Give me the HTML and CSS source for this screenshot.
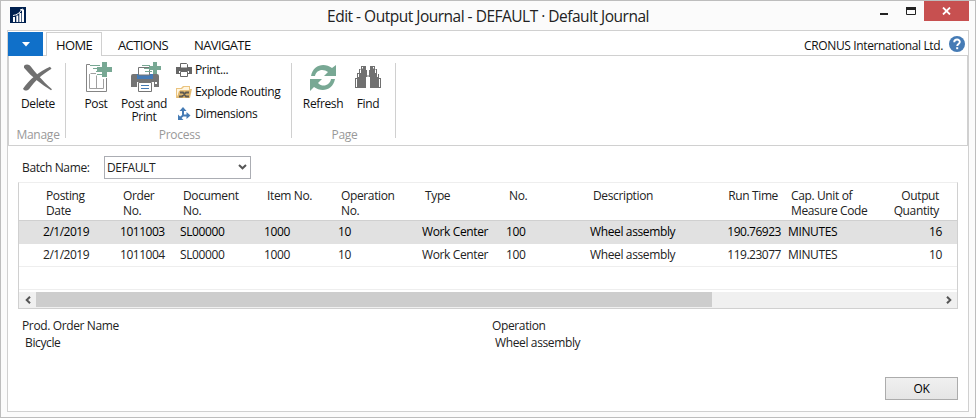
FILE: index.html
```html
<!DOCTYPE html>
<html lang="en">
<head>
<meta charset="utf-8">
<title>Edit - Output Journal</title>
<link rel="stylesheet" href="styles.css">
</head>
<body>
<div class="window">
  <header class="titlebar">
    <svg class="app-icon" width="16" height="16" viewBox="0 0 16 16"><rect width="16" height="16" fill="#00204f"/><path d="M3 10h2v5H3zM6.300 8.500h2V15h-2zM9.300 6h2v9h-2zM12 3h2v12h-2z" fill="#fff"/><path d="M3 8.500C7 8 9.500 6 12 2.500M10 3l3-1v2.500" fill="none" stroke="#fff"/></svg>
    <h1 class="title">Edit - Output Journal - DEFAULT · Default Journal</h1>
    <div class="controls">
      <svg width="75" height="20" viewBox="0 0 75 20"><path d="M31 12h8v2h-8z" fill="#222"/><path d="M57.500 7v6.500h9V7" fill="none" stroke="#222"/><path d="M57 6h10v3H57z" fill="#222"/></svg>
      <div class="close"><svg width="9" height="8" viewBox="0 0 9 8"><path d="M1 .5l7 7M8 .5l-7 7" stroke="#fff" stroke-width="1.800"/></svg></div>
    </div>
  </header>
  <main class="frame">
    <nav class="tabs">
      <div class="file-tab"><svg width="8" height="5" viewBox="0 0 8 5"><path d="M0 0h8L4 4.500z" fill="#fff"/></svg></div>
      <div class="tab active"><span>HOME</span></div>
      <div class="tab actions"><span>ACTIONS</span></div>
      <div class="tab navigate"><span>NAVIGATE</span></div>
      <div class="company">CRONUS International Ltd.</div>
      <svg class="help" width="16" height="16" viewBox="0 0 16 16"><circle cx="8" cy="8" r="8" fill="#457bb5"/><path d="M5.200 6.200C5.300 2.700 11 2.700 10.800 6c-.1 1.900-2.600 2-2.600 4" fill="none" stroke="#fff" stroke-width="1.900"/><path d="M7.200 11.200h2v2h-2z" fill="#fff"/></svg>
    </nav>
    <section class="ribbon">
      <div class="group manage">
        <div class="tools">
          <div class="tool delete"><svg width="30" height="28" viewBox="0 0 30 30" preserveAspectRatio="none"><path d="M1 2C3 0 6 0 8 3c3 4 11 15 21 24l-1 1C18 22 9 14 1 4z" fill="#707070"/><path d="M27 3l1.500 2C19 11 12 18 6 27c-2 2-5 2-6-.5C6 17 16 8 27 3z" fill="#707070"/></svg><span>Delete</span></div>
        </div>
        <div class="group-name">Manage</div>
      </div>
      <div class="group process">
        <div class="tools">
          <div class="tool post"><svg width="28" height="30" viewBox="0 0 28 30"><path d="M4 2.500H.5v27h20V16" fill="none" stroke="#858585"/><path d="M4.500 11.500H10M3.500 12v14.500h14V17M10.500 13.500v13M3.500 16.500V26" fill="none" stroke="#a0a0a0"/><path d="M4 3.500h10M7 6.500h8M10 9.500h6M11 12.500h5" stroke="#78a894"/><path d="M16 0h5v5h5v5h-5v5h-5v-5h-5V5h5z" fill="#78a894"/></svg><span>Post</span></div>
          <div class="tool post-print"><svg width="31" height="30" viewBox="0 0 31 30"><path d="M0 14q0-2 2-2h24q2 0 2 2v11H0z" fill="#757575"/><path d="M6 12h16v5H6z" fill="#457bb5"/><path d="M7.500 13V5.500h11V13z" fill="#fff" stroke="#757575"/><path d="M11 3.500h8M13 6.500h8M14 9.500h7" stroke="#78a894"/><path d="M6 20h17v6H6z" fill="#fff"/><path d="M7.500 20.500h13v9h-13z" fill="#fff" stroke="#757575"/><path d="M10 23.500h8M10 26.500h8" stroke="#457bb5"/><path d="M24 20h2v2h-2z" fill="#fff"/><path d="M22 0h4v4h4v4h-4v4h-4V8h-4V4h4z" fill="#78a894"/></svg><span>Post and<br>Print</span></div>
          <div class="small-tools">
            <div class="small"><svg width="16" height="16" viewBox="0 0 16 16"><path d="M0 5h16v7H0z" fill="#666"/><path d="M4.500 6V1.500h6l1 1V6z" fill="#fff" stroke="#666"/><path d="M3 9h10v2H3z" fill="#fff"/><path d="M4.500 9.500h7v5h-7z" fill="#fff" stroke="#666"/></svg><span>Print...</span></div>
            <div class="small explode"><svg width="16" height="16" viewBox="0 0 16 16"><path d="M0 14V4h5l2-2h7v3h2l-2 9H0z" fill="#eac37e"/><path d="M1 13V5h5l2-2h5v3H4z" fill="#fff5df"/><path d="M3 7h12l-2 7H1z" fill="#e0b76d"/><path d="M4 8.500h3l3 4h3M3 12.500h3l4-4h3" fill="none" stroke="#625c52" stroke-width="1.800"/></svg><span>Explode Routing</span></div>
            <div class="small dimensions"><svg width="16" height="16" viewBox="0 0 16 16"><path d="M7 3v6.500H12M7 9.500L4 12" fill="none" stroke="#457bb5" stroke-width="2"/><path d="M7 1l3.500 4h-7zM10.500 6l4 3.500-4 3.500zM2 8.500V14h5.500z" fill="#457bb5"/></svg><span>Dimensions</span></div>
          </div>
        </div>
        <div class="group-name">Process</div>
      </div>
      <div class="group page">
        <div class="tools">
          <div class="tool refresh"><svg width="26" height="28" viewBox="0 0 26 28"><path d="M1 12C3 1 14-2 22 4l4-3v11H14l4-4C13 4 6 6 5 12z" fill="#78a894"/><path d="M25 15c-2 11-13 14-21 8l-4 4V15h12l-4 4c5 5 12 2 13-4z" fill="#78a894"/></svg><span>Refresh</span></div>
          <div class="tool find"><svg width="26" height="24" viewBox="0 0 26 24"><path d="M6 1h5v4h1v5h2V5h1V1h5v3h2v5h2v4h2v10H15V12h-4v11H0V13h2V8h2V4h2z" fill="#707070"/><path d="M7.500 2v1.500M5.500 4.500V8M3.500 9v3M1.500 14v8M18.500 2v1.500M20.500 4.500V8M22.500 9v3M24.500 14v8M12 11h2" stroke="#fff"/></svg><span>Find</span></div>
        </div>
        <div class="group-name">Page</div>
      </div>
    </section>
    <section class="content">
      <div class="batch"><label>Batch Name:</label><div class="select"><span>DEFAULT</span><svg width="9" height="6" viewBox="0 0 9 6"><path d="M1 1l3.500 3.300L8 1" fill="none" stroke="#555" stroke-width="2"/></svg></div></div>
      <div class="table">
        <div class="row head"><div>Posting<br>Date</div><div>Order<br>No.</div><div>Document<br>No.</div><div>Item No.</div><div>Operation<br>No.</div><div>Type</div><div>No.</div><div>Description</div><div class="num">Run Time</div><div>Cap. Unit of<br>Measure Code</div><div class="num">Output<br>Quantity</div></div>
        <div class="row selected"><div class="digits">2/1/2019</div><div class="digits">1011003</div><div>SL00000</div><div>1000</div><div>10</div><div>Work Center</div><div>100</div><div>Wheel assembly</div><div class="num digits">190.76923</div><div class="code">MINUTES</div><div class="num">16</div></div>
        <div class="row"><div class="digits">2/1/2019</div><div class="digits">1011004</div><div>SL00000</div><div>1000</div><div>10</div><div>Work Center</div><div>100</div><div>Wheel assembly</div><div class="num digits">119.23077</div><div class="code">MINUTES</div><div class="num">10</div></div>
        <div class="row empty"></div>
        <div class="scrollbar"><div class="arrow"><svg width="6" height="8" viewBox="0 0 6 8"><path d="M5 .7L1.700 4 5 7.300" fill="none" stroke="#555" stroke-width="2"/></svg></div><div class="thumb"></div><div class="arrow right"><svg width="6" height="8" viewBox="0 0 6 8"><path d="M1 .7L4.300 4 1 7.300" fill="none" stroke="#555" stroke-width="2"/></svg></div></div>
      </div>
      <div class="details"><div><div>Prod. Order Name</div><div class="value">Bicycle</div></div><div><div>Operation</div><div class="value">Wheel assembly</div></div></div>
      <div class="footer"><button>OK</button></div>
    </section>
  </main>
</div>
</body>
</html>
```
FILE: styles.css
```css
* { box-sizing: border-box; }
body { margin: 0; font: 12px/15px "Open Sans", "Noto Sans", sans-serif; letter-spacing: -0.37px; color: #222; }
svg { display: block; flex: none; }
.window { width: 976px; height: 418px; border: 1px solid #bdbdbd; background: #fbfbfb; padding: 0 6px; }
.titlebar { height: 29px; display: grid; grid-template-columns: 160px 1fr 160px; }
.app-icon { margin: 6px 0 0 3px; }
.title { margin: 0; text-align: center; font-size: 15.5px; line-height: 30px; font-weight: 400; letter-spacing: -0.5px; }
.controls { display: flex; justify-content: flex-end; }
.close { width: 45px; height: 20px; background: #c75050; display: flex; align-items: center; justify-content: center; }
.frame { height: 382px; border: 1px solid #d0d0d0; background: #fff; }
.tabs { height: 25px; display: flex; align-items: flex-end; color: #111; position: relative; z-index: 1; }
.file-tab { width: 35px; height: 24px; background: #1070c9; display: flex; align-items: center; justify-content: center; }
.tab { height: 24px; line-height: 26px; text-align: center; font-size: 13px; letter-spacing: -0.62px; }
.tab.active { width: 56px; margin-left: 3px; border: 1px solid #d0d0d0; border-bottom: 0; background: #fff; line-height: 25px; }
.tab.actions { margin-left: 16px; width: 49px; }
.tab.navigate { margin-left: 27px; width: 56px; }
.company { margin-left: auto; line-height: 21px; }
.help { margin: 0 3px 4px 6px; }
.ribbon { height: 91px; margin-top: -1px; border: 1px solid #d0d0d0; display: flex; padding-top: 7px; color: #111; }
.group { height: 75px; border-right: 1px solid #d0d0d0; display: flex; flex-direction: column; }
.manage { width: 57px; }
.process { width: 226px; }
.page { width: 104px; }
.tools { display: flex; height: 62px; }
.group-name { text-align: center; color: #999; height: 13px; line-height: 19px; padding-left: 2px; letter-spacing: -0.25px; }
.tool { display: flex; flex-direction: column; text-align: center; white-space: nowrap; }
.tool span { margin-top: auto; height: 28px; line-height: 13px; }
.delete { width: 57px; align-items: center; padding: 1px 0 0 2px; }
.post { width: 38px; margin-left: 11px; }
.post svg { margin-left: 9px; margin-top: -1px; }
.post-print { width: 50px; margin-left: 4px; }
.post-print svg { margin-left: 12px; margin-top: -1px; }
.small-tools { margin-left: 7px; margin-top: -1px; }
.small { height: 22px; display: flex; gap: 3px; align-items: flex-start; line-height: 16px; white-space: nowrap; }
.refresh { width: 46px; margin-left: 8px; align-items: center; padding-top: 1px; }
.find { width: 36px; margin-left: 4px; align-items: center; padding-top: 2px; }
.content { padding: 10px 10px 0; }
.batch { display: flex; align-items: center; height: 23px; padding-left: 4px; }
.batch label { width: 82px; }
.select { width: 147px; height: 23px; border: 1px solid #abadb3; display: flex; justify-content: space-between; align-items: center; padding: 0 3px 1px 2px; }
.table { margin-top: 3px; width: 940px; height: 127px; border: 1px solid #d0d0d0; border-top-color: #eee; }
.row { display: grid; grid-template-columns: 77px 60px 84px 74px 84px 84px 84px 104px 87px 87px 74px; padding-left: 24px; height: 23px; line-height: 22px; border-bottom: 1px solid #eee; white-space: nowrap; }
.row.head { height: 38px; padding: 5px 0 0 27px; line-height: 15px; border-color: #d0d0d0; }
.row.selected { background: #e1e1e1; border-color: #e1e1e1; color: #000; }
.num { text-align: right; }
.digits { letter-spacing: -0.48px; }
.head .num { padding-right: 6px; }
.row > :nth-child(10) { padding-left: 7px; }
.scrollbar { margin-top: 2px; height: 16px; display: flex; background: #f0f0f0; }
.arrow { width: 17px; height: 15px; display: flex; align-items: center; justify-content: center; }
.arrow.right { margin-left: auto; }
.thumb { width: 676px; height: 15px; background: #cdcdcd; }
.details { display: grid; grid-template-columns: 470px 1fr; padding: 9px 0 0 4px; line-height: 15px; }
.value { padding-left: 3px; margin-top: 2px; }
.footer { display: flex; justify-content: flex-end; margin-top: 27px; }
button { width: 73px; height: 23px; border: 1px solid #acacac; background: linear-gradient(#f0f0f0, #e5e5e5); font: inherit; letter-spacing: inherit; color: #000; padding: 0; }
```
